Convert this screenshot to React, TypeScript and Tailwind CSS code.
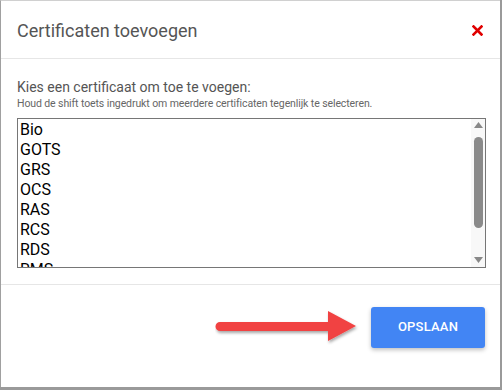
import React from 'react';

const certificates = ['Bio', 'GOTS', 'GRS', 'OCS', 'RAS', 'RCS', 'RDS', 'RMS'];

const App: React.FC = () => {
  return (
    <div className="w-[502px] h-[390px] bg-[#9a9a9a] font-['Roboto',sans-serif] overflow-hidden">
      <div className="w-[500px] h-[387px] bg-white border-l border-t border-l-[#a0a0a0] border-t-[#d0d0d0] flex flex-col">
        <div className="h-[58px] flex items-center justify-between pl-[16px] pr-[17px] border-b border-[#e6e6e6]">
          <h2 className="text-[18px] text-[#555] font-normal pt-[2px]">Certificaten toevoegen</h2>
          <svg width="11" height="11" viewBox="0 0 11 11" className="mt-[2px]">
            <path d="M1.5 1.5 L9.5 9.5 M9.5 1.5 L1.5 9.5" stroke="#e00000" strokeWidth="2.6" strokeLinecap="square" />
          </svg>
        </div>
        <div className="px-[16px] pt-[20px] h-[226px] border-b border-[#e6e6e6]">
          <p className="text-[14px] leading-[16px] text-[#555]">Kies een certificaat om toe te voegen:</p>
          <p className="text-[10.5px] leading-[14px] text-[#666] mt-[2px] tracking-[-0.1px]">
            Houd de shift toets ingedrukt om meerdere certificaten tegenlijk te selecteren.
          </p>
          <div className="mt-[7px] w-[469px] h-[150px] border border-[#767676] flex overflow-hidden">
            <ul className="flex-1 pl-[2px] pt-[1px]">
              {certificates.map((c) => (
                <li key={c} className="text-[16px] leading-[20px] text-black">
                  {c}
                </li>
              ))}
            </ul>
            <div className="w-[14px] bg-[#f8f8f8] flex flex-col items-center pt-[3px]">
              <svg width="9" height="6" viewBox="0 0 9 6">
                <path d="M4.5 0 L9 6 L0 6 Z" fill="#888" />
              </svg>
              <div className="w-[9px] h-[91px] rounded-full bg-[#8a8a8a] mt-[9px]" />
              <svg width="9" height="6" viewBox="0 0 9 6" className="mt-[29px]">
                <path d="M0 0 L9 0 L4.5 6 Z" fill="#888" />
              </svg>
            </div>
          </div>
        </div>
        <div className="flex-1 flex items-center justify-end pr-[15px] gap-[10px] pb-[18px]">
          <svg width="146" height="36" viewBox="0 0 146 36">
            <defs>
              <filter id="sh" x="-10%" y="-30%" width="120%" height="160%">
                <feDropShadow dx="1" dy="2" stdDeviation="1.5" floodColor="#000" floodOpacity="0.35" />
              </filter>
            </defs>
            <g filter="url(#sh)">
              <path d="M5 13 L113 13 L113 2 L141 17 L113 32 L113 22 L5 22 A4.5 4.5 0 0 1 5 13 Z" fill="#f14242" />
            </g>
          </svg>
          <button className="w-[114px] h-[41px] rounded-[3px] bg-[#4285f4] text-white text-[13px] font-medium tracking-[0.2px] shadow-[0_2px_4px_rgba(0,0,0,0.25)]">
            OPSLAAN
          </button>
        </div>
      </div>
    </div>
  );
};

export default App;
